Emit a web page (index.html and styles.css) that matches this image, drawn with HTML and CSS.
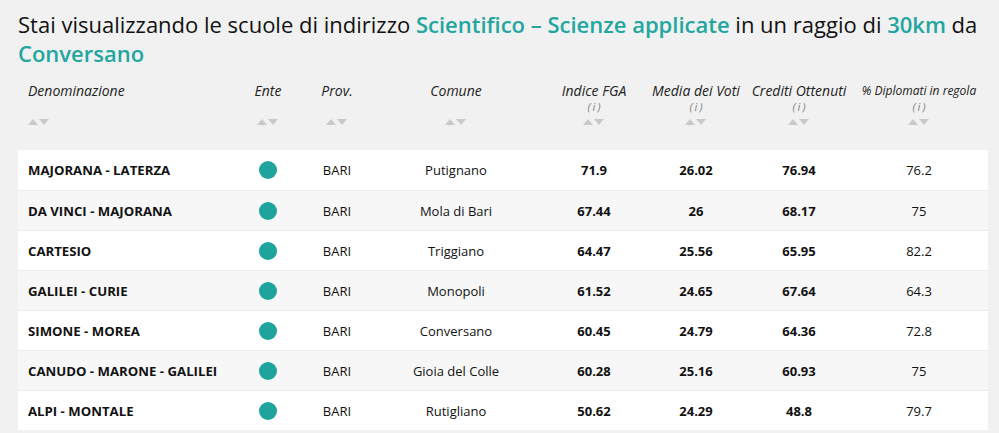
FILE: index.html
```html
<!DOCTYPE html>
<html lang="it">
<head>
<meta charset="utf-8">
<title>Scuole</title>
<link rel="stylesheet" href="styles.css">
</head>
<body>
<h1 class="title">Stai visualizzando le scuole di indirizzo <span class="hl">Scientifico – Scienze applicate</span> in un raggio di <span class="hl">30km</span> da <span class="hl">Conversano</span></h1>

<div class="head">
  <div class="hc left"><span class="lbl">Denominazione</span><span class="info"></span><span class="sort"><svg width="22" height="7" viewBox="0 0 22 7"><path d="M0 7 L5 1 L10 7 Z M11 1 L21 1 L16 7 Z" fill="#c9c9c9"/></svg></span></div>
  <div class="hc"><span class="lbl">Ente</span><span class="info"></span><span class="sort"><svg width="22" height="7" viewBox="0 0 22 7"><path d="M0 7 L5 1 L10 7 Z M11 1 L21 1 L16 7 Z" fill="#c9c9c9"/></svg></span></div>
  <div class="hc"><span class="lbl">Prov.</span><span class="info"></span><span class="sort"><svg width="22" height="7" viewBox="0 0 22 7"><path d="M0 7 L5 1 L10 7 Z M11 1 L21 1 L16 7 Z" fill="#c9c9c9"/></svg></span></div>
  <div class="hc"><span class="lbl">Comune</span><span class="info"></span><span class="sort"><svg width="22" height="7" viewBox="0 0 22 7"><path d="M0 7 L5 1 L10 7 Z M11 1 L21 1 L16 7 Z" fill="#c9c9c9"/></svg></span></div>
  <div class="hc"><span class="lbl">Indice FGA</span><span class="info">(i)</span><span class="sort"><svg width="22" height="7" viewBox="0 0 22 7"><path d="M0 7 L5 1 L10 7 Z M11 1 L21 1 L16 7 Z" fill="#c9c9c9"/></svg></span></div>
  <div class="hc"><span class="lbl">Media dei Voti</span><span class="info">(i)</span><span class="sort"><svg width="22" height="7" viewBox="0 0 22 7"><path d="M0 7 L5 1 L10 7 Z M11 1 L21 1 L16 7 Z" fill="#c9c9c9"/></svg></span></div>
  <div class="hc"><span class="lbl">Crediti Ottenuti</span><span class="info">(i)</span><span class="sort"><svg width="22" height="7" viewBox="0 0 22 7"><path d="M0 7 L5 1 L10 7 Z M11 1 L21 1 L16 7 Z" fill="#c9c9c9"/></svg></span></div>
  <div class="hc last"><span class="lbl small">% Diplomati in regola</span><span class="info">(i)</span><span class="sort"><svg width="22" height="7" viewBox="0 0 22 7"><path d="M0 7 L5 1 L10 7 Z M11 1 L21 1 L16 7 Z" fill="#c9c9c9"/></svg></span></div>
</div>

<div class="table">
  <div class="row">
    <div class="c name">MAJORANA - LATERZA</div><div class="c"><span class="dot"></span></div><div class="c">BARI</div><div class="c">Putignano</div><div class="c b">71.9</div><div class="c b">26.02</div><div class="c b">76.94</div><div class="c last">76.2</div>
  </div>
  <div class="row">
    <div class="c name">DA VINCI - MAJORANA</div><div class="c"><span class="dot"></span></div><div class="c">BARI</div><div class="c">Mola di Bari</div><div class="c b">67.44</div><div class="c b">26</div><div class="c b">68.17</div><div class="c last">75</div>
  </div>
  <div class="row">
    <div class="c name">CARTESIO</div><div class="c"><span class="dot"></span></div><div class="c">BARI</div><div class="c">Triggiano</div><div class="c b">64.47</div><div class="c b">25.56</div><div class="c b">65.95</div><div class="c last">82.2</div>
  </div>
  <div class="row">
    <div class="c name">GALILEI - CURIE</div><div class="c"><span class="dot"></span></div><div class="c">BARI</div><div class="c">Monopoli</div><div class="c b">61.52</div><div class="c b">24.65</div><div class="c b">67.64</div><div class="c last">64.3</div>
  </div>
  <div class="row">
    <div class="c name">SIMONE - MOREA</div><div class="c"><span class="dot"></span></div><div class="c">BARI</div><div class="c">Conversano</div><div class="c b">60.45</div><div class="c b">24.79</div><div class="c b">64.36</div><div class="c last">72.8</div>
  </div>
  <div class="row">
    <div class="c name">CANUDO - MARONE - GALILEI</div><div class="c"><span class="dot"></span></div><div class="c">BARI</div><div class="c">Gioia del Colle</div><div class="c b">60.28</div><div class="c b">25.16</div><div class="c b">60.93</div><div class="c last">75</div>
  </div>
  <div class="row">
    <div class="c name">ALPI - MONTALE</div><div class="c"><span class="dot"></span></div><div class="c">BARI</div><div class="c">Rutigliano</div><div class="c b">50.62</div><div class="c b">24.29</div><div class="c b">48.8</div><div class="c last">79.7</div>
  </div>
</div>
</body>
</html>
```

FILE: styles.css
```css
* { box-sizing: border-box; }

body {
  margin: 0;
  background: #f1f1f1;
  font-family: "Open Sans", "Liberation Sans", sans-serif;
  color: #111;
}

.title {
  margin: 10px 18px 0;
  font-size: 22px;
  line-height: 29px;
  font-weight: 400;
  color: #111;
}

.hl {
  color: #22a6a0;
  font-weight: 600;
}

.head,
.row {
  display: grid;
  grid-template-columns: 217px 66px 72px 166px 110px 94px 112px 133px;
  margin: 0 11px 0 18px;
}

.head {
  padding-top: 15px;
  height: 82px;
}

.hc {
  display: flex;
  flex-direction: column;
  align-items: center;
  font-style: italic;
  color: #222;
}

.hc.left {
  align-items: flex-start;
  padding-left: 10px;
}

.hc.last {
  padding-right: 5px;
}

.lbl {
  font-size: 14px;
  line-height: 16px;
  height: 16px;
  white-space: nowrap;
}

.lbl.small {
  font-size: 12px;
}

.info {
  margin-top: 2px;
  font-size: 11px;
  line-height: 11px;
  height: 11px;
  color: #808080;
  letter-spacing: 2px;
  padding-left: 2px;
}

.sort {
  display: block;
  margin-top: 6px;
  height: 7px;
  line-height: 0;
}

.table {
  background: #fff;
  margin: 0 11px 0 18px;
}

.table .row {
  margin: 0;
  height: 40px;
  border-top: 1px solid #ececec;
}

.table .row:first-child {
  border-top: 0;
}

.table .row:nth-child(even) {
  background: #f7f7f7;
}

.c {
  display: flex;
  align-items: center;
  justify-content: center;
  font-size: 13px;
  color: #111;
  white-space: nowrap;
}

.c.name {
  justify-content: flex-start;
  padding-left: 10px;
  font-weight: 700;
  font-size: 13.2px;
}

.c.b {
  font-weight: 700;
}

.c.last {
  padding-right: 5px;
}

.dot {
  display: block;
  width: 18px;
  height: 18px;
  border-radius: 50%;
  background: #1fa39d;
}
```
